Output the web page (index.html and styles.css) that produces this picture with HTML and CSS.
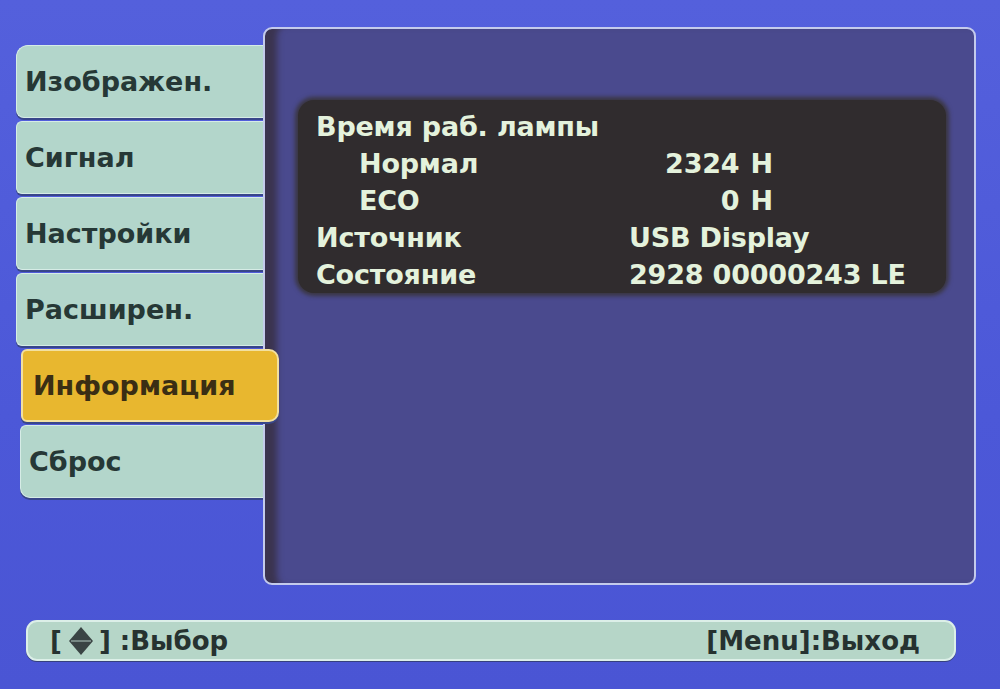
FILE: index.html
```html
<!DOCTYPE html>
<html lang="ru">
<head>
<meta charset="utf-8">
<title>Информация</title>
<link rel="stylesheet" href="styles.css">
</head>
<body>
<div class="screen">
  <div class="main">
    <nav class="nav">
      <div class="tab tab-first">Изображен.</div>
      <div class="tab">Сигнал</div>
      <div class="tab">Настройки</div>
      <div class="tab">Расширен.</div>
      <div class="tab tab-active">Информация</div>
      <div class="tab tab-last">Сброс</div>
    </nav>
    <section class="panel">
      <div class="info">
        <div class="row"><span class="label">Время раб. лампы</span></div>
        <div class="row"><span class="label sub">Нормал</span><span class="value num">2324 H</span></div>
        <div class="row"><span class="label sub">ECO</span><span class="value num">0 H</span></div>
        <div class="row"><span class="label">Источник</span><span class="value">USB Display</span></div>
        <div class="row"><span class="label">Состояние</span><span class="value">2928 00000243 LE</span></div>
      </div>
    </section>
  </div>
  <footer class="footer">
    <span class="hint">[<svg class="diamond" viewBox="0 0 26 30" width="26" height="30"><polygon points="13,1 25,15 13,29 1,15" fill="#3a4444"/><line x1="3" y1="15" x2="23" y2="15" stroke="#9fb4ae" stroke-width="1.2"/></svg>] :Выбор</span>
    <span class="hint">[Menu]:Выход</span>
  </footer>
</div>
</body>
</html>
```

FILE: styles.css
```css
* { box-sizing: border-box; }

html, body {
  margin: 0;
  padding: 0;
  width: 1000px;
  height: 689px;
  overflow: hidden;
  background: #4f5bd9;
  font-family: "DejaVu Sans", "Liberation Sans", sans-serif;
}

.screen {
  width: 1000px;
  height: 689px;
  padding: 27px 0 0 0;
  background: linear-gradient(180deg, #5460dc 0%, #4c58d8 60%, #4a55d4 100%);
}

.main {
  display: flex;
  align-items: flex-start;
  padding-left: 16px;
}

.nav {
  width: 247px;
  margin-top: 18px;
  display: flex;
  flex-direction: column;
  gap: 3px;
  position: relative;
  z-index: 2;
}

.tab {
  height: 73px;
  background: #b3d6cb;
  border: 1px solid #d6ece6;
  border-right: none;
  border-radius: 6px 0 0 6px;
  box-shadow: 0 2px 0 #38468a;
  color: #263836;
  font-weight: bold;
  font-size: 27px;
  display: flex;
  align-items: center;
  padding-left: 8px;
  letter-spacing: 0px;
}

.tab-first { border-radius: 12px 0 0 8px; }
.tab-last { border-radius: 6px 0 0 10px; margin-left: 4px; }

.tab-active {
  background: #e8b72f;
  border: 2px solid #f2e0a0;
  border-radius: 6px 10px 10px 6px;
  color: #3a2e14;
  margin-left: 5px;
  margin-right: -16px;
  padding-left: 10px;
  box-shadow: 0 2px 0 #38468a;
}

.panel {
  width: 713px;
  height: 558px;
  margin-top: 0;
  background: #4a4a8e;
  border: 2px solid #c4cbec;
  border-radius: 9px;
  box-shadow: inset 16px 0 6px -4px #3b3450;
  padding: 71px 0 0 33px;
  position: relative;
  z-index: 1;
}

.info {
  width: 648px;
  height: 193px;
  background: #302c2e;
  border-radius: 16px;
  box-shadow: 0 0 4px 3px #3a3640;
  padding: 8px 0 0 18px;
  color: #e4f2dc;
  font-weight: bold;
  font-size: 27px;
}

.row {
  height: 37px;
  display: flex;
  align-items: center;
  white-space: nowrap;
  letter-spacing: -0.2px;
}

.label {
  width: 313px;
}

.label.sub {
  padding-left: 43px;
}

.value.num {
  width: 144px;
  text-align: right;
  word-spacing: 2px;
}

.footer {
  margin: 35px 0 0 26px;
  width: 930px;
  height: 41px;
  background: #b6d6c8;
  border: 2px solid #dcefe8;
  border-radius: 11px;
  box-shadow: 0 1px 0 #35407e;
  display: flex;
  justify-content: space-between;
  align-items: center;
  padding: 0 34px 0 22px;
  color: #263230;
  font-size: 26px;
  font-weight: 600;
}

.hint {
  display: flex;
  align-items: center;
  white-space: nowrap;
}

.diamond {
  margin: 0 5px 0 6px;
}
```
